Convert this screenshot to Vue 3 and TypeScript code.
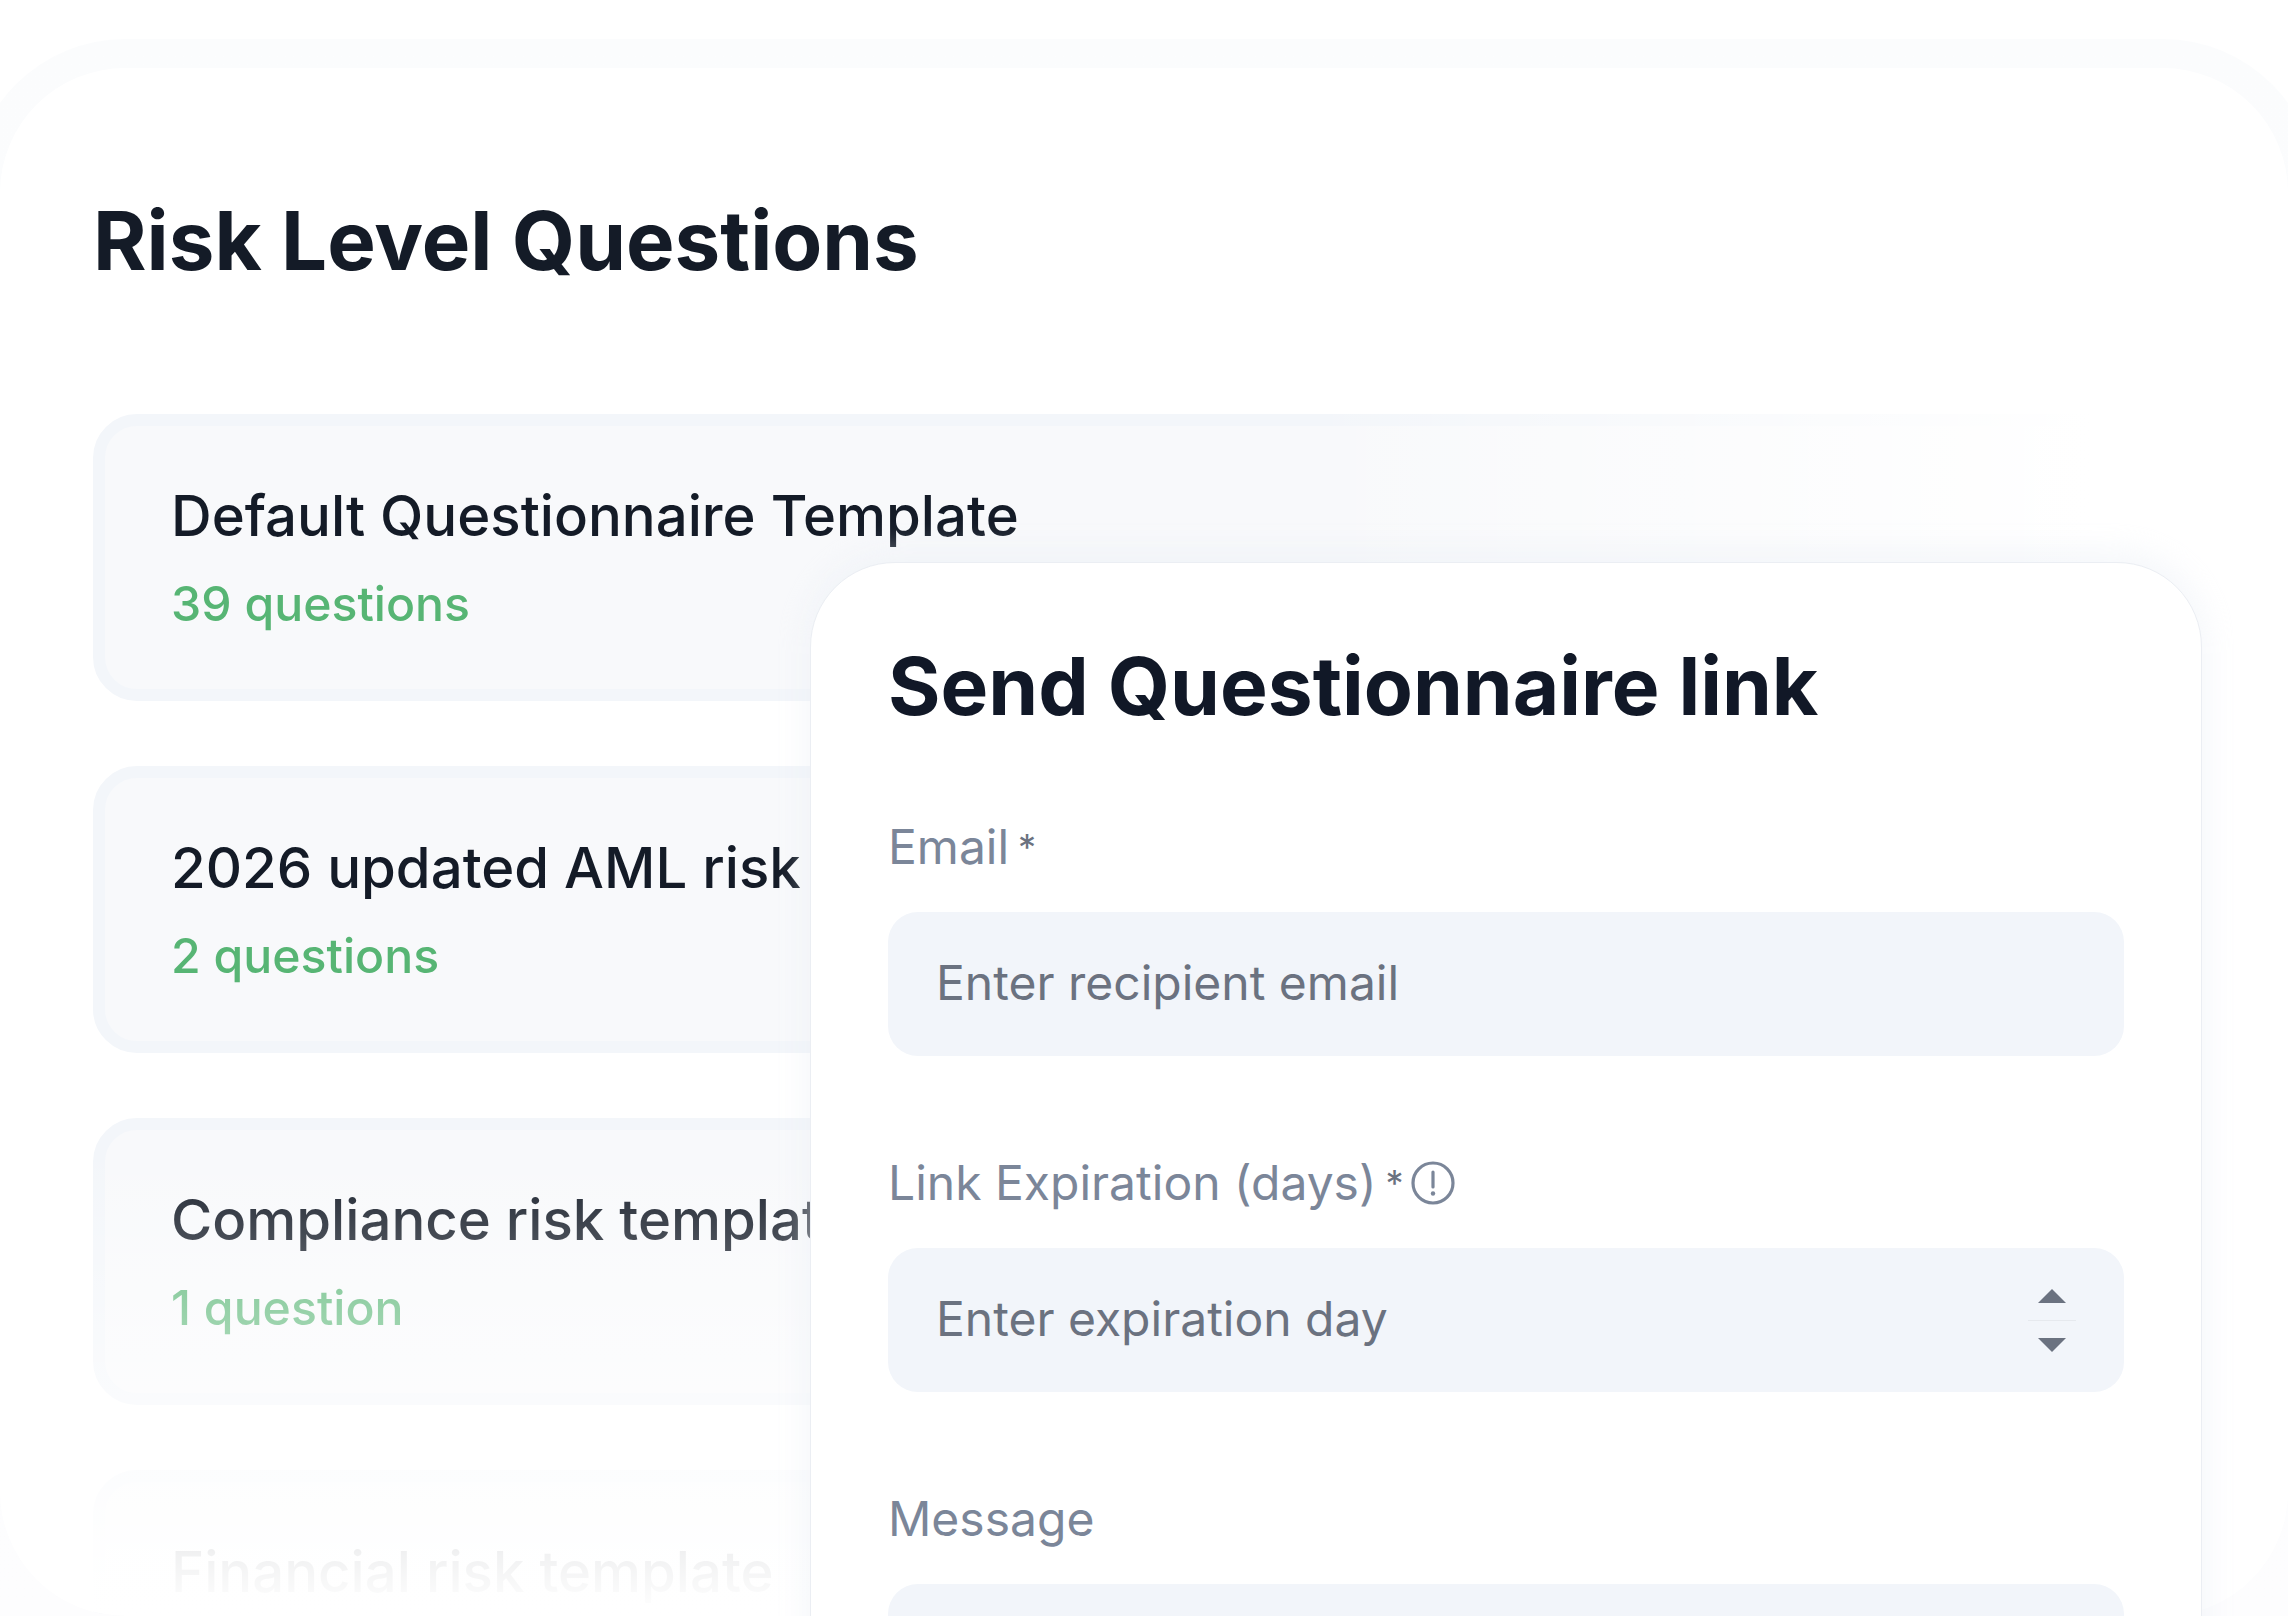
<script setup lang="ts">
interface Template {
  name: string
  count: string
}

const templates: Template[] = [
  { name: 'Default Questionnaire Template', count: '39 questions' },
  { name: '2026 updated AML risk assessment', count: '2 questions' },
  { name: 'Compliance risk template', count: '1 question' },
  { name: 'Financial risk template', count: '4 questions' }
]
</script>

<template>
  <div class="stage">
    <div class="frame">
      <div class="panel">
        <h1 class="page-title">Risk Level Questions</h1>
        <div class="cards">
          <div v-for="t in templates" :key="t.name" class="card">
            <div class="card-name">{{ t.name }}</div>
            <div class="card-count">{{ t.count }}</div>
          </div>
          <div class="fade-right"></div>
          <div class="fade-bottom"></div>
        </div>
      </div>
    </div>

    <div class="modal">
      <h2 class="modal-title">Send Questionnaire link</h2>

      <div class="field">
        <div class="label">
          <span>Email</span>
          <span class="req">*</span>
        </div>
        <div class="input">Enter recipient email</div>
      </div>

      <div class="field">
        <div class="label">
          <span>Link Expiration (days)</span>
          <span class="req">*</span>
          <svg class="info" viewBox="0 0 44 44" fill="none">
            <circle cx="22" cy="22" r="20" stroke="#7b8699" stroke-width="3.2" />
            <path d="M22 11v15" stroke="#7b8699" stroke-width="3.2" stroke-linecap="round" />
            <circle cx="22" cy="32.5" r="2.2" fill="#7b8699" />
          </svg>
        </div>
        <div class="input">
          Enter expiration day
          <div class="stepper">
            <span class="tri up"></span>
            <span class="sep"></span>
            <span class="tri down"></span>
          </div>
        </div>
      </div>

      <div class="field">
        <div class="label">
          <span>Message</span>
        </div>
        <div class="input tall"></div>
      </div>
    </div>
  </div>
</template>

<style>
body {
  background: #fff;
}
</style>

<style scoped>
.stage {
  position: relative;
  width: 2288px;
  height: 1616px;
  overflow: hidden;
  background: #fff;
  font-family: Inter, 'Liberation Sans', sans-serif;
}

.frame {
  margin: 39px -29px 0;
  padding: 29px 29px 0;
  height: 1577px;
  box-sizing: border-box;
  border-radius: 154px 154px 0 0;
  background: linear-gradient(#fbfcfd, #fdfdfe);
}

.panel {
  height: 1548px;
  border-radius: 125px;
  background: #fff;
  overflow: hidden;
  padding: 0 94px 0 93px;
  box-sizing: border-box;
}

.page-title {
  margin: 0;
  padding-top: 128px;
  height: 218px;
  box-sizing: content-box;
  font-size: 81.6px;
  line-height: 90px;
  font-weight: 700;
  color: #141b27;
}

.cards {
  position: relative;
  display: flex;
  flex-direction: column;
  gap: 65px;
}

.card {
  height: 287px;
  flex-shrink: 0;
  box-sizing: border-box;
  padding: 56px 66px 0;
  border: 12px solid #f3f6fa;
  border-radius: 44px;
  background: #f8f9fb;
}

.card-name {
  font-size: 56.3px;
  line-height: 68px;
  font-weight: 500;
  color: #141b27;
  white-space: nowrap;
}

.card-count {
  margin-top: 24px;
  font-size: 48.2px;
  line-height: 60px;
  font-weight: 500;
  color: #57b574;
  white-space: nowrap;
}

.fade-right,
.fade-bottom {
  position: absolute;
  top: 0;
  left: -93px;
  right: -94px;
  bottom: 0;
}

.fade-right {
  background: linear-gradient(90deg, rgba(255, 255, 255, 0) 1300px, #fff 2090px);
}

.fade-bottom {
  background: linear-gradient(180deg, rgba(255, 255, 255, 0) 730px, rgba(255, 255, 255, 0.94) 1140px, #fff 1200px);
}

.modal {
  position: absolute;
  left: 810px;
  top: 562px;
  width: 1392px;
  height: 1300px;
  box-sizing: border-box;
  padding: 78px 77px 0;
  border: 1px solid #ebeef3;
  border-radius: 85px;
  background: #fff;
  box-shadow: 0 -7px 28px 6px rgba(236, 240, 246, 0.45);
}

.modal-title {
  margin: 0 0 86px;
  font-size: 80.2px;
  line-height: 90px;
  font-weight: 700;
  color: #111827;
}

.field {
  margin-bottom: 97px;
}

.label {
  display: flex;
  align-items: center;
  height: 60px;
  margin-bottom: 35px;
  font-size: 48px;
  line-height: 60px;
  color: #7b8699;
  white-space: nowrap;
}

.req {
  font-size: 36px;
  color: #6b7280;
  margin: 0 7px 0 9px;
}

.info {
  width: 44px;
  height: 44px;
}

.input {
  position: relative;
  display: flex;
  align-items: center;
  height: 144px;
  box-sizing: border-box;
  padding: 0 48px 4px;
  border-radius: 30px;
  background: #f2f5fa;
  font-size: 48px;
  color: #6b7280;
}

.input.tall {
  height: 300px;
}

.stepper {
  position: absolute;
  right: 48px;
  top: 41px;
  width: 48px;
  display: flex;
  flex-direction: column;
  align-items: center;
}

.tri {
  width: 0;
  height: 0;
  border-left: 14px solid transparent;
  border-right: 14px solid transparent;
}

.tri.up {
  border-bottom: 14px solid #6b7280;
}

.tri.down {
  border-top: 14px solid #6b7280;
}

.sep {
  width: 48px;
  height: 1px;
  margin: 17px 0;
  background: #e6e9ee;
}
</style>
